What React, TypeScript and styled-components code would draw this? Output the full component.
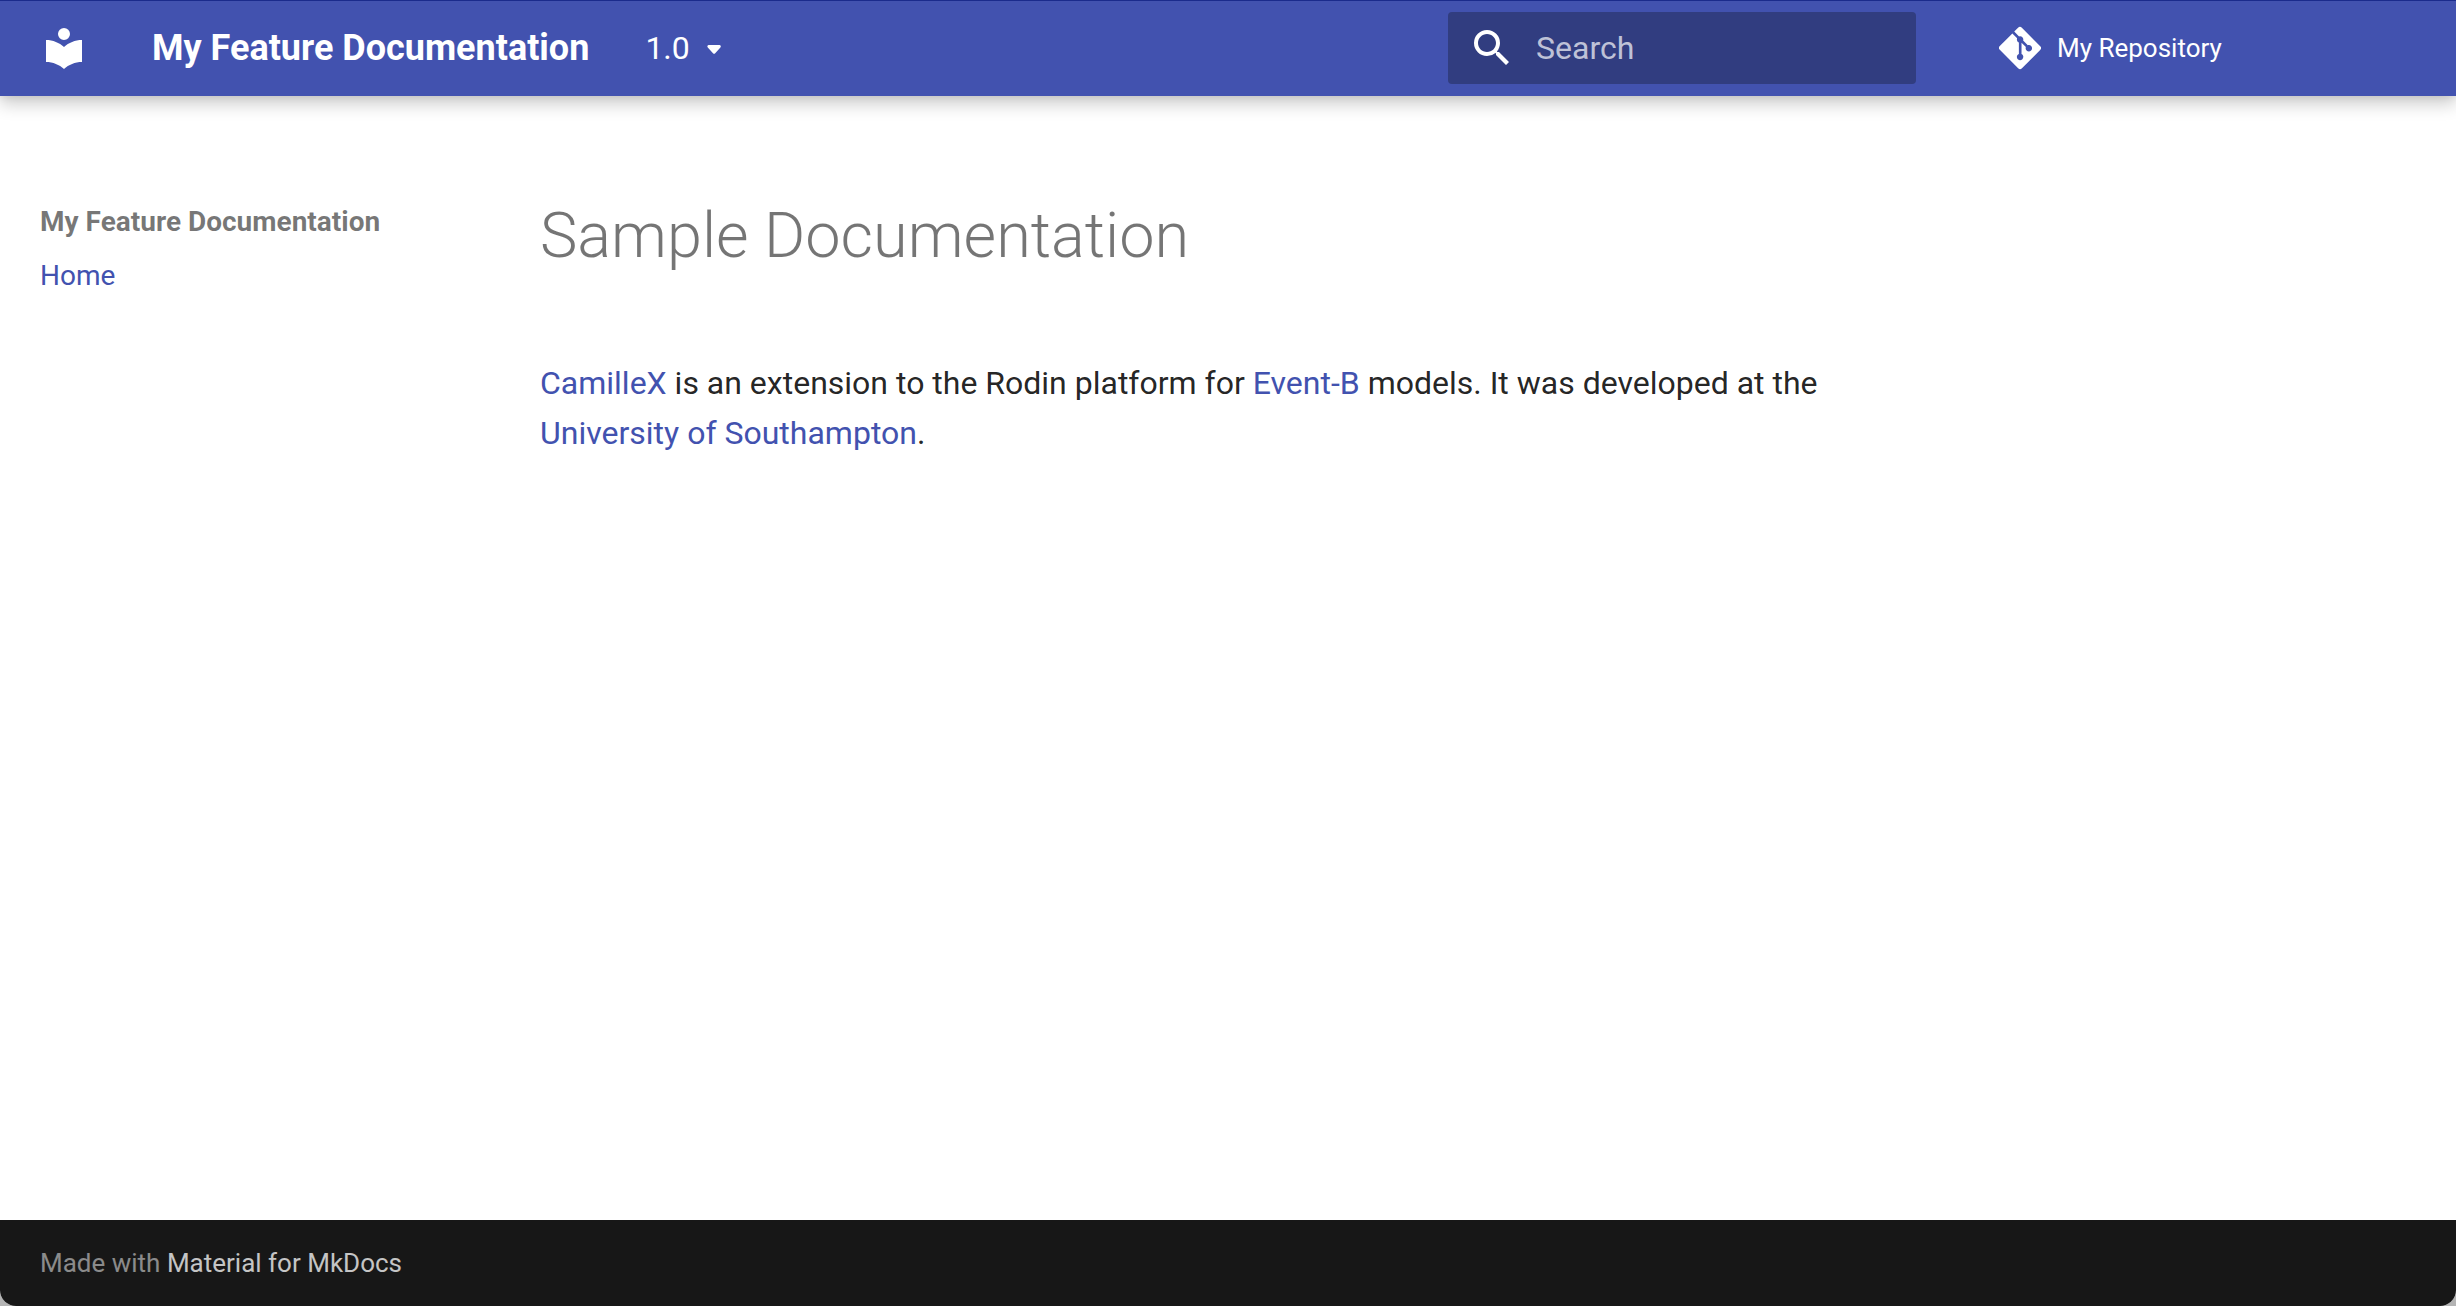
import React from "react";
import styled, { createGlobalStyle } from "styled-components";
import { FaGitAlt } from "react-icons/fa";

const indigo = "#4252af";

const GlobalStyle = createGlobalStyle`
  *, *::before, *::after { box-sizing: border-box; }
  body {
    margin: 0;
    background: #b4b4b4;
    color: rgba(0, 0, 0, 0.87);
    font-family: Roboto, "Liberation Sans", sans-serif;
    font-size: 32px;
    line-height: 50px;
    -webkit-font-smoothing: antialiased;
  }
`;

const Page = styled.div`
  display: flex;
  flex-direction: column;
  min-height: 100vh;
  background: #fff;
  border-radius: 0 0 16px 16px;
  overflow: hidden;
`;

const Header = styled.header`
  background: ${indigo};
  color: #fff;
  box-shadow: inset 0 1px 0 #1b2b8c, 0 0 8px rgba(0, 0, 0, 0.1),
    0 8px 16px rgba(0, 0, 0, 0.2);
`;

const Grid = styled.div`
  width: 100%;
  max-width: 2440px;
  margin: 0 auto;
`;

const HeaderInner = styled(Grid).attrs({ as: "nav" })`
  display: flex;
  align-items: center;
  height: 96px;
  padding: 0 8px 0 32px;
`;

const Logo = styled.a`
  display: flex;
  color: inherit;
  margin-right: 64px;
`;

const Icon = styled.svg`
  display: block;
  width: 48px;
  height: 48px;
  fill: currentColor;
`;

const Title = styled.span`
  font-size: 36px;
  font-weight: 700;
  white-space: nowrap;
`;

const Version = styled.button`
  display: flex;
  align-items: center;
  gap: 16px;
  margin-left: 56px;
  margin-right: auto;
  padding: 0;
  border: 0;
  background: none;
  color: inherit;
  font: inherit;
  cursor: pointer;
`;

const Caret = styled.svg`
  width: 16px;
  height: 24px;
  fill: currentColor;
`;

const SearchForm = styled.form`
  display: flex;
  align-items: center;
  gap: 20px;
  width: 468px;
  height: 72px;
  padding-left: 20px;
  border-radius: 4px;
  background: #313d80;
`;

const SearchInput = styled.input`
  flex: 1;
  min-width: 0;
  height: 100%;
  padding: 0;
  border: 0;
  outline: 0;
  background: none;
  color: #fff;
  font: inherit;
  &::placeholder { color: rgba(255, 255, 255, 0.7); opacity: 1; }
`;

const Source = styled.a`
  display: flex;
  align-items: center;
  gap: 16px;
  width: 468px;
  margin-left: 56px;
  padding-left: 27px;
  color: inherit;
  font-size: 26px;
  text-decoration: none;
  svg { width: 42px; height: 48px; }
`;

const Main = styled(Grid).attrs({ as: "main" })`
  display: flex;
  flex: 1;
  padding-top: 98px;
`;

const Sidebar = styled.nav`
  flex: 0 0 484px;
  padding: 10px 0 0 32px;
  font-size: 28px;
  line-height: 36px;
`;

const SidebarTitle = styled.div`
  color: rgba(0, 0, 0, 0.54);
  font-weight: 700;
`;

const SidebarList = styled.ul`
  margin: 18px 0 0;
  padding: 0;
  list-style: none;
`;

const Link = styled.a`
  color: ${indigo};
  text-decoration: none;
`;

const Article = styled.article`
  flex: 1;
  padding: 0 48px;
  max-width: 1420px;
`;

const Heading = styled.h1`
  margin: 0 0 80px;
  color: rgba(0, 0, 0, 0.54);
  font-size: 63px;
  font-weight: 300;
  line-height: 84px;
`;

const Paragraph = styled.p`
  margin: 0;
`;

const Footer = styled.footer`
  background: #171717;
  color: rgba(255, 255, 255, 0.5);
  font-size: 26px;
  line-height: 42px;
`;

const Credit = styled(Grid)`
  padding: 22px 32px;
  a { color: rgba(255, 255, 255, 0.75); text-decoration: none; }
`;

export default function App() {
  return (
    <>
      <GlobalStyle />
      <Page>
        <Header>
          <HeaderInner>
            <Logo href="#" aria-label="My Feature Documentation">
              <Icon viewBox="0 0 24 24">
                <path d="M12 8a3 3 0 0 0 3-3 3 3 0 0 0-3-3 3 3 0 0 0-3 3 3 3 0 0 0 3 3m0 3.54C9.64 9.35 6.5 8 3 8v11c3.5 0 6.64 1.35 9 3.54 2.36-2.19 5.5-3.54 9-3.54V8c-3.5 0-6.64 1.35-9 3.54Z" />
              </Icon>
            </Logo>
            <Title>My Feature Documentation</Title>
            <Version type="button">
              1.0
              <Caret viewBox="0 0 16 24">
                <path d="M2.8 9h10.6c1.4 0 1.9 1.5 1 2.5l-5.2 5.8c-.6.7-1.6.7-2.2 0l-5.2-5.8c-.9-1-.4-2.5 1-2.5Z" />
              </Caret>
            </Version>
            <SearchForm role="search">
              <Icon viewBox="0 0 24 24">
                <path d="M9.5 3A6.5 6.5 0 0 1 16 9.5c0 1.61-.59 3.09-1.56 4.23l.27.27h.79l5 5-1.5 1.5-5-5v-.79l-.27-.27A6.516 6.516 0 0 1 9.5 16 6.5 6.5 0 0 1 3 9.5 6.5 6.5 0 0 1 9.5 3m0 2C7 5 5 7 5 9.5S7 14 9.5 14 14 12 14 9.5 12 5 9.5 5Z" />
              </Icon>
              <SearchInput type="text" placeholder="Search" aria-label="Search" />
            </SearchForm>
            <Source href="#">
              <FaGitAlt />
              My Repository
            </Source>
          </HeaderInner>
        </Header>
        <Main>
          <Sidebar aria-label="Navigation">
            <SidebarTitle>My Feature Documentation</SidebarTitle>
            <SidebarList>
              <li>
                <Link href="#">Home</Link>
              </li>
            </SidebarList>
          </Sidebar>
          <Article>
            <Heading>Sample Documentation</Heading>
            <Paragraph>
              <Link href="#">CamilleX</Link> is an extension to the Rodin platform for{" "}
              <Link href="#">Event-B</Link> models. It was developed at the{" "}
              <Link href="#">University of Southampton</Link>.
            </Paragraph>
          </Article>
        </Main>
        <Footer>
          <Credit>
            Made with <a href="#">Material for MkDocs</a>
          </Credit>
        </Footer>
      </Page>
    </>
  );
}
